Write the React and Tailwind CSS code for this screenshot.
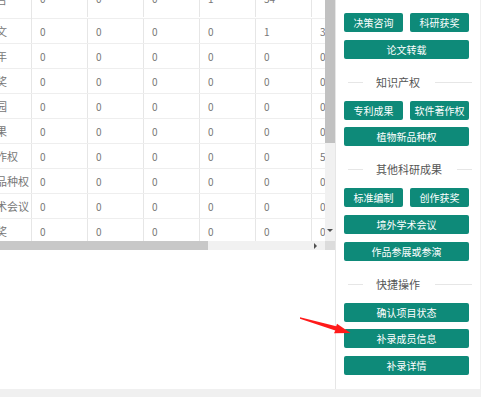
import React from "react";

const rows = [
  { label: "告", vals: ["0", "0", "0", "1", "54", ""] },
  { label: "文", vals: ["0", "0", "0", "0", "1", "3"] },
  { label: "年", vals: ["0", "0", "0", "0", "0", "0"] },
  { label: "奖", vals: ["0", "0", "0", "0", "0", "0"] },
  { label: "园", vals: ["0", "0", "0", "0", "0", "0"] },
  { label: "果", vals: ["0", "0", "0", "0", "0", "0"] },
  { label: "作权", vals: ["0", "0", "0", "0", "0", "5"] },
  { label: "品种权", vals: ["0", "0", "0", "0", "0", "0"] },
  { label: "术会议", vals: ["0", "0", "0", "0", "0", "0"] },
  { label: "奖", vals: ["0", "0", "0", "0", "0", "0"] },
];

const font = { fontFamily: '"Noto Sans CJK SC", "Noto Sans", sans-serif' };

function Btn({ children, full }) {
  return (
    <div
      className={
        "h-[19px] rounded-[2px] bg-[#0e8a79] text-white text-[10px] leading-[19px] text-center whitespace-nowrap " +
        (full ? "w-full" : "flex-1")
      }
    >
      {children}
    </div>
  );
}

function Header({ children }) {
  return (
    <div className="h-[42px] pt-[4px] flex items-center">
      <div className="w-[15px] ml-[4px] h-px bg-[#e6e6e6]" />
      <div className="ml-[13px] text-[11px] text-[#555] leading-none whitespace-nowrap">{children}</div>
      <div className="ml-[15px] flex-1 h-px bg-[#e6e6e6] mr-[-3px]" />
    </div>
  );
}

export default function App() {
  return (
    <div className="w-[481px] h-[397px] bg-[#f0f0f0] relative overflow-hidden" style={font}>
      <div className="flex h-[389px]">
        {/* left table area */}
        <div className="w-[336px] bg-white border-r border-[#e6e6e6] flex flex-col">
          <div className="flex h-[241px]">
            <div className="w-[325px] overflow-hidden">
              <div className="mt-[-6px]">
                {rows.map((r, i) => (
                  <div
                    key={i}
                    className={
                      "flex h-[25px] border-b border-[#eeeeee] text-[10px] text-[#777] w-[400px] " +
                      (i === 0 ? "items-start" : "items-stretch")
                    }
                  >
                    <div
                      className={
                        "w-[32px] border-r border-[#e6e6e6] overflow-hidden whitespace-nowrap flex " +
                        (i === 0 ? "h-[25px] items-start" : "items-center")
                      }
                    >
                      <span className={"text-[11px] ml-[-4px] " + (i === 0 ? "leading-[14px] mt-[-2px]" : "")}>{r.label}</span>
                    </div>
                    {r.vals.map((v, j) => (
                      <div
                        key={j}
                        className={
                          "w-[56px] shrink-0 border-r border-[#e6e6e6] pl-[8px] flex " +
                          (i === 0 ? "h-[25px] items-start leading-[14px] pt-0 mt-[-2px]" : "items-center")
                        }
                      >
                        {v}
                      </div>
                    ))}
                  </div>
                ))}
              </div>
            </div>
            <div className="w-[10px] bg-[#f1f1f1] flex flex-col">
              <div className="h-[143px] bg-[#c1c1c1]" />
              <div className="flex-1" />
              <div className="h-[12px] flex items-start justify-center">
                <div className="w-0 h-0 border-l-[3px] border-r-[3px] border-t-[3px] border-l-transparent border-r-transparent border-t-[#505050]" />
              </div>
            </div>
          </div>
          <div className="flex h-[9px]">
            <div className="w-[325px] bg-[#f1f1f1] flex items-center">
              <div className="w-[208px] h-full bg-[#c8c8c8]" />
              <div className="flex-1" />
              <div className="w-0 h-0 border-t-[3px] border-b-[3px] border-l-[3px] border-t-transparent border-b-transparent border-l-[#505050] mr-[8px]" />
            </div>
            <div className="w-[10px] bg-[#dcdcdc]" />
          </div>
        </div>
        {/* right panel */}
        <div className="w-[144px] bg-white pl-[8px] pr-[11px] pt-[13px]">
          <div className="flex gap-[7px]">
            <Btn>决策咨询</Btn>
            <Btn>科研获奖</Btn>
          </div>
          <div className="mt-[8px]">
            <Btn full>论文转载</Btn>
          </div>
          <Header>知识产权</Header>
          <div className="flex gap-[7px]">
            <Btn>专利成果</Btn>
            <Btn>软件著作权</Btn>
          </div>
          <div className="mt-[7px]">
            <Btn full>植物新品种权</Btn>
          </div>
          <Header>其他科研成果</Header>
          <div className="flex gap-[7px]">
            <Btn>标准编制</Btn>
            <Btn>创作获奖</Btn>
          </div>
          <div className="mt-[8px]">
            <Btn full>境外学术会议</Btn>
          </div>
          <div className="mt-[8px]">
            <Btn full>作品参展或参演</Btn>
          </div>
          <Header>快捷操作</Header>
          <Btn full>确认项目状态</Btn>
          <div className="mt-[7px]">
            <Btn full>补录成员信息</Btn>
          </div>
          <div className="mt-[8px]">
            <Btn full>补录详情</Btn>
          </div>
        </div>
      </div>
      <svg className="absolute left-0 top-0 pointer-events-none" width="481" height="397">
        <polygon
          points="300,317.3 336.2,326.2 337,323.8 350.5,333 334,333.2 335.3,330.6 300,318.7"
          fill="#ff1a1a"
        />
      </svg>
    </div>
  );
}
